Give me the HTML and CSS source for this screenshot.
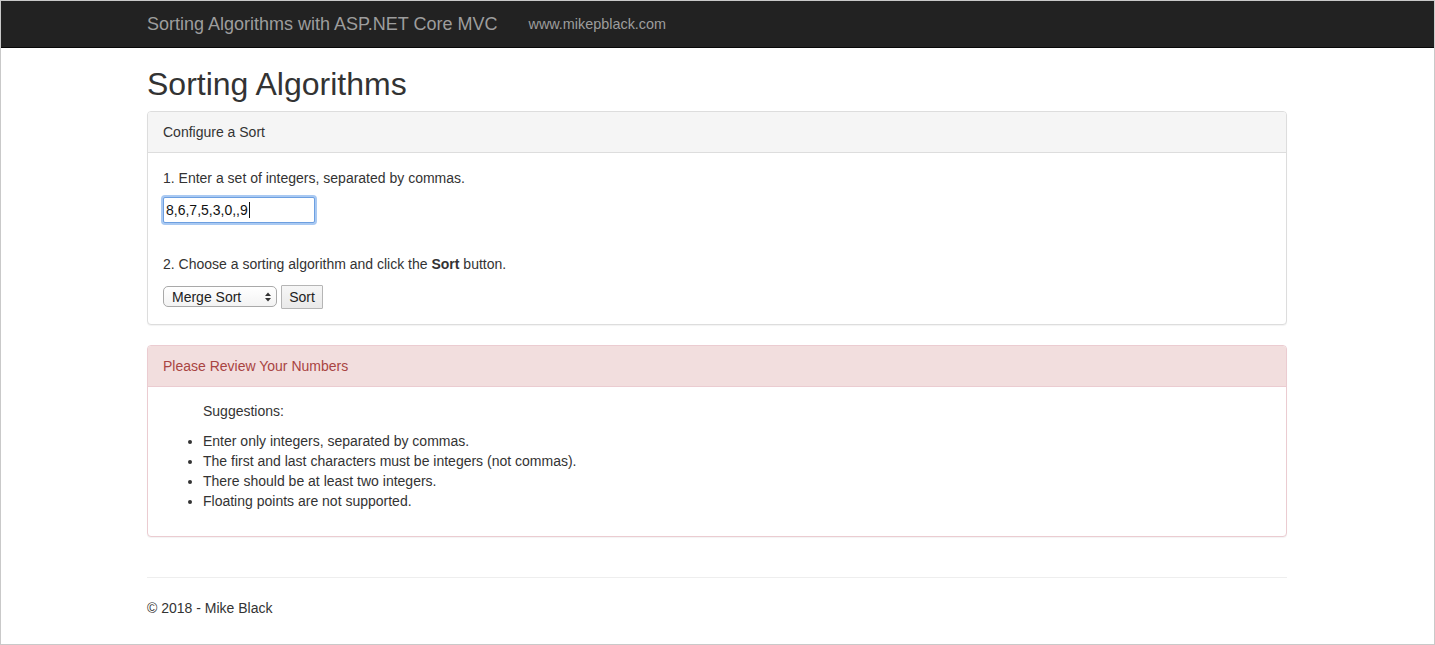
FILE: index.html
```html
<!DOCTYPE html>
<html>
<head>
<meta charset="utf-8">
<title>Sorting Algorithms</title>
<link rel="stylesheet" href="styles.css">
</head>
<body>
<div class="frame">
  <nav class="navbar">
    <div class="container nav-inner">
      <span class="brand">Sorting Algorithms with ASP.NET Core MVC</span>
      <span class="nav-link">www.mikepblack.com</span>
    </div>
  </nav>
  <main class="container">
    <h2 class="page-title">Sorting Algorithms</h2>
    <section class="panel">
      <div class="panel-heading">Configure a Sort</div>
      <div class="panel-body">
        <p class="step">1. Enter a set of integers, separated by commas.</p>
        <div class="input-wrap">
          <input class="num-input" type="text" value="8,6,7,5,3,0,,9">
          <span class="caret"></span>
        </div>
        <p class="step step-2">2. Choose a sorting algorithm and click the <b>Sort</b> button.</p>
        <div class="controls">
          <div class="select-wrap">
            <select class="algo-select">
              <option>Merge Sort</option>
              <option>Bubble Sort</option>
              <option>Quick Sort</option>
            </select>
            <svg class="select-arrows" width="8" height="12" viewBox="0 0 8 12">
              <path d="M1 5 L4 1.5 L7 5 Z" fill="#333"/>
              <path d="M1 7 L4 10.5 L7 7 Z" fill="#333"/>
            </svg>
          </div>
          <button class="sort-btn" type="button">Sort</button>
        </div>
      </div>
    </section>
    <section class="panel panel-danger">
      <div class="panel-heading">Please Review Your Numbers</div>
      <div class="panel-body">
        <p class="suggest">Suggestions:</p>
        <ul class="tips">
          <li>Enter only integers, separated by commas.</li>
          <li>The first and last characters must be integers (not commas).</li>
          <li>There should be at least two integers.</li>
          <li>Floating points are not supported.</li>
        </ul>
      </div>
    </section>
    <hr class="rule">
    <footer class="footer">© 2018 - Mike Black</footer>
  </main>
</div>
</body>
</html>
```

FILE: styles.css
```css
* { box-sizing: border-box; }
html, body { margin: 0; padding: 0; }
body {
  font-family: "Liberation Sans", Arial, Helvetica, sans-serif;
  font-size: 14px;
  line-height: 20px;
  color: #333;
  background: #fff;
}
.frame {
  height: 645px;
  border: 1px solid #c9c9c9;
  overflow: hidden;
}
.container {
  width: 1171px;
  margin: 0 auto;
  padding: 0 16px 0 15px;
}
.navbar {
  height: 47px;
  background: #222;
  border-bottom: 1px solid #080808;
}
.nav-inner {
  display: flex;
  align-items: center;
  height: 45px;
}
.brand {
  font-size: 18px;
  line-height: 20px;
  color: #9d9d9d;
  padding-right: 16px;
}
.nav-link {
  color: #9d9d9d;
  padding-left: 15px;
  font-size: 14.4px;
}
.page-title {
  font-size: 32px;
  font-weight: 500;
  line-height: 33px;
  margin: 20px 0 10px;
  color: #333;
}
.panel {
  border: 1px solid #ddd;
  border-radius: 4px;
  margin-bottom: 20px;
  background: #fff;
  box-shadow: 0 1px 1px rgba(0,0,0,0.05);
}
.panel-heading {
  padding: 10px 15px;
  background: #f5f5f5;
  border-bottom: 1px solid #ddd;
  border-radius: 3px 3px 0 0;
  color: #333;
}
.panel-body {
  padding: 15px;
}
.step { margin: 0 0 10px; }
.step-2 { margin-top: 31px; margin-bottom: 11px; }
.input-wrap {
  position: relative;
  display: inline-block;
  vertical-align: top;
}
.num-input {
  display: block;
  width: 152px;
  height: 26px;
  margin: -1px 0 0;
  padding: 1px 2px;
  font-family: "Liberation Sans", Arial, sans-serif;
  font-size: 14px;
  color: #111;
  border: 1px solid #6d9fe0;
  border-radius: 2px;
  box-shadow: 0 0 0 2px #a9c9f2;
  outline: none;
}
.caret {
  position: absolute;
  left: 86px;
  top: 4px;
  width: 1px;
  height: 16px;
  background: #111;
}
.controls {
  display: flex;
  align-items: flex-start;
  gap: 4px;
}
.select-wrap {
  position: relative;
  width: 114px;
  height: 21px;
  margin-top: 1px;
}
.algo-select {
  -webkit-appearance: none;
  appearance: none;
  width: 114px;
  height: 21px;
  padding: 0 8px;
  font-family: "Liberation Sans", Arial, sans-serif;
  font-size: 14px;
  color: #222;
  background: linear-gradient(#fff, #f3f3f3);
  border: 1px solid #a9a9a9;
  border-radius: 5px;
}
.select-arrows {
  position: absolute;
  right: 5px;
  top: 5px;
  pointer-events: none;
}
.sort-btn {
  width: 42px;
  height: 24px;
  padding: 0;
  font-family: "Liberation Sans", Arial, sans-serif;
  font-size: 14px;
  color: #222;
  background: linear-gradient(#f6f6f6, #e9e9e9);
  border: 1px solid #b5b5b5;
  border-radius: 1px;
}
.panel-danger { border-color: #ebccd1; }
.panel-danger .panel-heading {
  background: #f2dede;
  color: #a94442;
  border-bottom-color: #ebccd1;
}
.suggest {
  margin: -1px 0 10px;
  padding-left: 40px;
}
.tips {
  margin: 0 0 10px;
  padding-left: 40px;
}
.rule {
  margin: 40px 0 20px;
  border: 0;
  border-top: 1px solid #eee;
}
.footer {
  margin: 0;
}
```
